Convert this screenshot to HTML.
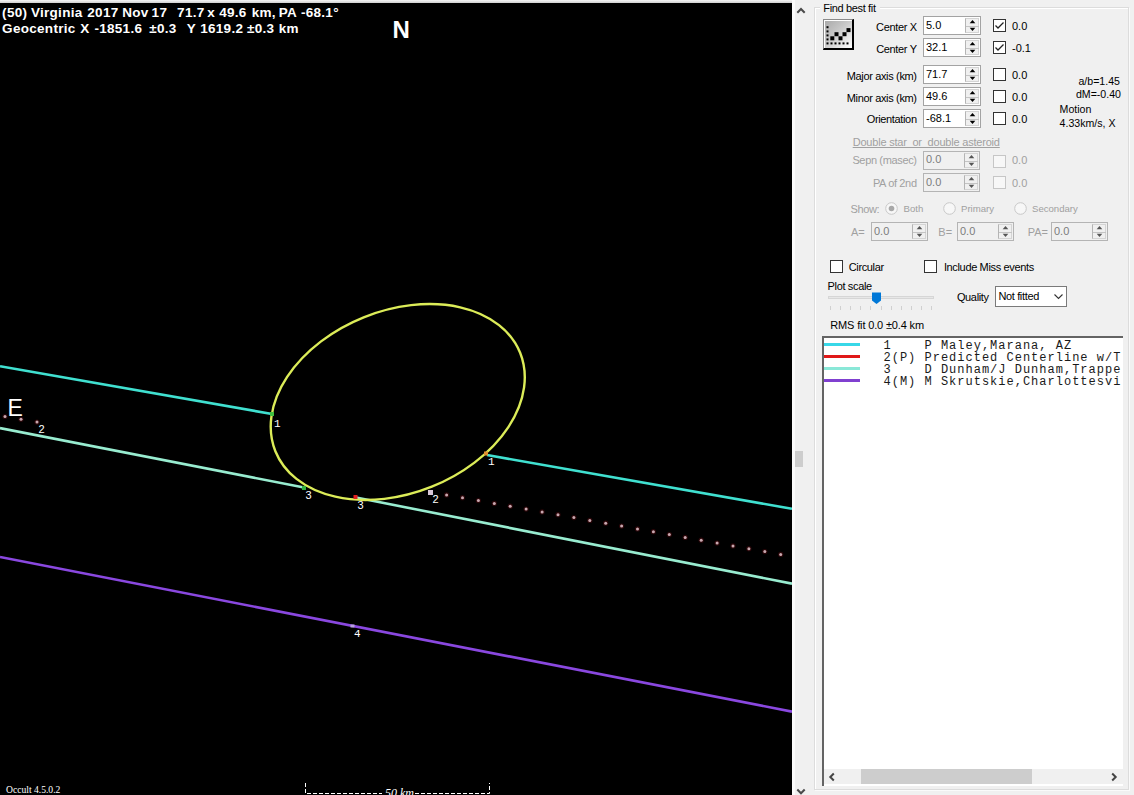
<!DOCTYPE html>
<html><head><meta charset="utf-8">
<style>
*{margin:0;padding:0;box-sizing:border-box}
html,body{width:1134px;height:795px;overflow:hidden;background:#f0f0f0;font-family:"Liberation Sans",sans-serif;font-size:11px;color:#000;position:relative}
#topband{position:absolute;left:0;top:0;width:792px;height:3px;background:linear-gradient(#f6f6f6,#cfcfcf)}
#plot{position:absolute;left:0;top:3px;width:792px;height:792px;background:#000;overflow:hidden}
#plot svg{position:absolute;left:0;top:-3px}
.t{position:absolute;white-space:nowrap}
</style></head><body>
<div id="topband"></div>
<div id="plot"><svg width="792" height="798" viewBox="0 0 792 798">
<line x1="0" y1="366.2" x2="272" y2="414" stroke="#40e0d0" stroke-width="2.6"/>
<line x1="487" y1="455" x2="792" y2="508.8" stroke="#40e0d0" stroke-width="2.6"/>
<line x1="0" y1="428.1" x2="304" y2="487.5" stroke="#98ecd0" stroke-width="2.6"/>
<line x1="356" y1="497.5" x2="792" y2="583.7" stroke="#98ecd0" stroke-width="2.6"/>
<line x1="0" y1="557" x2="792" y2="711.6" stroke="#8a48e0" stroke-width="2.6"/>
<ellipse cx="397.75" cy="402" rx="131.9" ry="91.3" transform="rotate(-21.9 397.75 402)" fill="none" stroke="#dcec58" stroke-width="2.4"/>
<rect x="270" y="412" width="4" height="4" fill="#40c040"/>
<rect x="484" y="451.5" width="4" height="4" fill="#e09030"/>
<rect x="302" y="486" width="4" height="4" fill="#30b040"/>
<rect x="353.5" y="495" width="4" height="4" fill="#e02020"/>
<rect x="428" y="490" width="5" height="5" fill="#d8c8d8"/>
<rect x="350.5" y="624.5" width="4" height="3" fill="#b8a0e0"/>
<text x="274" y="427" fill="#fff" font-family="Liberation Mono" font-size="11">1</text>
<text x="488" y="465" fill="#fff" font-family="Liberation Mono" font-size="11">1</text>
<text x="305.5" y="499" fill="#fff" font-family="Liberation Sans" font-size="11">3</text>
<text x="357.5" y="509" fill="#fff" font-family="Liberation Sans" font-size="11">3</text>
<text x="432.5" y="503" fill="#fff" font-family="Liberation Sans" font-size="11">2</text>
<text x="38.5" y="433" fill="#fff" font-family="Liberation Sans" font-size="11">2</text>
<text x="354" y="637" fill="#fff" font-family="Liberation Mono" font-size="11">4</text>
<text x="392.5" y="38" fill="#fff" font-family="Liberation Sans" font-weight="bold" font-size="24">N</text>
<text x="7.5" y="416" fill="#fff" font-family="Liberation Sans" font-size="23">E</text>
<path d="M305.5 783 V793.5 H489.5 V783" fill="none" stroke="#fff" stroke-width="1" stroke-dasharray="4 2"/>
<rect x="382" y="787" width="32" height="10" fill="#000"/>
<text x="385" y="797" fill="#fff" font-family="Liberation Serif" font-style="italic" font-size="12">50 km</text>
<text x="6" y="793" fill="#fff" font-family="Liberation Serif" font-size="9.6">Occult 4.5.0.2</text>
<circle cx="5.0" cy="416.5" r="2.6" fill="#2a0608"/><circle cx="5.0" cy="416.5" r="1.5" fill="#c8a8b0"/><circle cx="21.0" cy="419.3" r="2.6" fill="#2a0608"/><circle cx="21.0" cy="419.3" r="1.5" fill="#c8a8b0"/><circle cx="37.0" cy="422.1" r="2.6" fill="#2a0608"/><circle cx="37.0" cy="422.1" r="1.5" fill="#c8a8b0"/><circle cx="446.6" cy="494.9" r="2.6" fill="#2a0608"/><circle cx="446.6" cy="494.9" r="1.5" fill="#c8a8b0"/><circle cx="462.5" cy="497.7" r="2.6" fill="#2a0608"/><circle cx="462.5" cy="497.7" r="1.5" fill="#c8a8b0"/><circle cx="478.4" cy="500.6" r="2.6" fill="#2a0608"/><circle cx="478.4" cy="500.6" r="1.5" fill="#c8a8b0"/><circle cx="494.3" cy="503.4" r="2.6" fill="#2a0608"/><circle cx="494.3" cy="503.4" r="1.5" fill="#c8a8b0"/><circle cx="510.2" cy="506.2" r="2.6" fill="#2a0608"/><circle cx="510.2" cy="506.2" r="1.5" fill="#c8a8b0"/><circle cx="526.1" cy="509.1" r="2.6" fill="#2a0608"/><circle cx="526.1" cy="509.1" r="1.5" fill="#c8a8b0"/><circle cx="542.1" cy="511.9" r="2.6" fill="#2a0608"/><circle cx="542.1" cy="511.9" r="1.5" fill="#c8a8b0"/><circle cx="558.0" cy="514.7" r="2.6" fill="#2a0608"/><circle cx="558.0" cy="514.7" r="1.5" fill="#c8a8b0"/><circle cx="573.9" cy="517.6" r="2.6" fill="#2a0608"/><circle cx="573.9" cy="517.6" r="1.5" fill="#c8a8b0"/><circle cx="589.8" cy="520.4" r="2.6" fill="#2a0608"/><circle cx="589.8" cy="520.4" r="1.5" fill="#c8a8b0"/><circle cx="605.7" cy="523.2" r="2.6" fill="#2a0608"/><circle cx="605.7" cy="523.2" r="1.5" fill="#c8a8b0"/><circle cx="621.6" cy="526.1" r="2.6" fill="#2a0608"/><circle cx="621.6" cy="526.1" r="1.5" fill="#c8a8b0"/><circle cx="637.5" cy="528.9" r="2.6" fill="#2a0608"/><circle cx="637.5" cy="528.9" r="1.5" fill="#c8a8b0"/><circle cx="653.4" cy="531.7" r="2.6" fill="#2a0608"/><circle cx="653.4" cy="531.7" r="1.5" fill="#c8a8b0"/><circle cx="669.3" cy="534.6" r="2.6" fill="#2a0608"/><circle cx="669.3" cy="534.6" r="1.5" fill="#c8a8b0"/><circle cx="685.2" cy="537.4" r="2.6" fill="#2a0608"/><circle cx="685.2" cy="537.4" r="1.5" fill="#c8a8b0"/><circle cx="701.2" cy="540.2" r="2.6" fill="#2a0608"/><circle cx="701.2" cy="540.2" r="1.5" fill="#c8a8b0"/><circle cx="717.1" cy="543.1" r="2.6" fill="#2a0608"/><circle cx="717.1" cy="543.1" r="1.5" fill="#c8a8b0"/><circle cx="733.0" cy="545.9" r="2.6" fill="#2a0608"/><circle cx="733.0" cy="545.9" r="1.5" fill="#c8a8b0"/><circle cx="748.9" cy="548.7" r="2.6" fill="#2a0608"/><circle cx="748.9" cy="548.7" r="1.5" fill="#c8a8b0"/><circle cx="764.8" cy="551.6" r="2.6" fill="#2a0608"/><circle cx="764.8" cy="551.6" r="1.5" fill="#c8a8b0"/><circle cx="780.7" cy="554.4" r="2.6" fill="#2a0608"/><circle cx="780.7" cy="554.4" r="1.5" fill="#c8a8b0"/>
</svg></div>
<div class="t" style="left:2.0999999999999996px;top:4.92px;font-size:13.5px;line-height:16.2px;color:#fff;font-weight:bold;letter-spacing:0.3px;">(50)</div>
<div class="t" style="left:30.9px;top:4.92px;font-size:13.5px;line-height:16.2px;color:#fff;font-weight:bold;letter-spacing:0.3px;">Virginia</div>
<div class="t" style="left:87.3px;top:4.92px;font-size:13.5px;line-height:16.2px;color:#fff;font-weight:bold;letter-spacing:0.3px;">2017</div>
<div class="t" style="left:122.2px;top:4.92px;font-size:13.5px;line-height:16.2px;color:#fff;font-weight:bold;letter-spacing:0.3px;">Nov</div>
<div class="t" style="left:151.6px;top:4.92px;font-size:13.5px;line-height:16.2px;color:#fff;font-weight:bold;letter-spacing:0.3px;">17</div>
<div class="t" style="left:177.1px;top:4.92px;font-size:13.5px;line-height:16.2px;color:#fff;font-weight:bold;letter-spacing:0.3px;">71.7</div>
<div class="t" style="left:207.29999999999998px;top:4.92px;font-size:13.5px;line-height:16.2px;color:#fff;font-weight:bold;letter-spacing:0.3px;">x</div>
<div class="t" style="left:219.2px;top:4.92px;font-size:13.5px;line-height:16.2px;color:#fff;font-weight:bold;letter-spacing:0.3px;">49.6</div>
<div class="t" style="left:251.7px;top:4.92px;font-size:13.5px;line-height:16.2px;color:#fff;font-weight:bold;letter-spacing:0.3px;">km,</div>
<div class="t" style="left:278.7px;top:4.92px;font-size:13.5px;line-height:16.2px;color:#fff;font-weight:bold;letter-spacing:0.3px;">PA</div>
<div class="t" style="left:300.9px;top:4.92px;font-size:13.5px;line-height:16.2px;color:#fff;font-weight:bold;letter-spacing:0.3px;">-68.1°</div>
<div class="t" style="left:2.0999999999999996px;top:21.12px;font-size:13.5px;line-height:16.2px;color:#fff;font-weight:bold;letter-spacing:0.3px;">Geocentric</div>
<div class="t" style="left:80.2px;top:21.12px;font-size:13.5px;line-height:16.2px;color:#fff;font-weight:bold;letter-spacing:0.3px;">X</div>
<div class="t" style="left:94.4px;top:21.12px;font-size:13.5px;line-height:16.2px;color:#fff;font-weight:bold;letter-spacing:0.3px;">-1851.6</div>
<div class="t" style="left:149.2px;top:21.12px;font-size:13.5px;line-height:16.2px;color:#fff;font-weight:bold;letter-spacing:0.3px;">±0.3</div>
<div class="t" style="left:186.7px;top:21.12px;font-size:13.5px;line-height:16.2px;color:#fff;font-weight:bold;letter-spacing:0.3px;">Y</div>
<div class="t" style="left:200.2px;top:21.12px;font-size:13.5px;line-height:16.2px;color:#fff;font-weight:bold;letter-spacing:0.3px;">1619.2</div>
<div class="t" style="left:247.0px;top:21.12px;font-size:13.5px;line-height:16.2px;color:#fff;font-weight:bold;letter-spacing:0.3px;">±0.3</div>
<div class="t" style="left:278.7px;top:21.12px;font-size:13.5px;line-height:16.2px;color:#fff;font-weight:bold;letter-spacing:0.3px;">km</div>
<div style="position:absolute;left:792px;top:0px;width:3px;height:795px;background:#fbfbfb;"></div>
<div style="position:absolute;left:795px;top:451px;width:8px;height:16px;background:#cdcdcd;"></div>
<svg style="position:absolute;left:795px;top:4px" width="12" height="12"><path d="M2.3 8.8 L6 5 L9.7 8.8" stroke="#4a4a4a" stroke-width="2" fill="none"/></svg>
<svg style="position:absolute;left:795px;top:784px" width="12" height="12"><path d="M2.3 5.5 L6 9.3 L9.7 5.5" stroke="#4a4a4a" stroke-width="2" fill="none"/></svg>
<div style="position:absolute;left:814px;top:7px;width:315px;height:783px;border:1px solid #dcdcdc;box-shadow:inset 1px 1px 0 #fff, 1px 1px 0 #fafafa;"></div>
<div style="position:absolute;left:820px;top:2px;width:60px;height:12px;background:#f0f0f0;"></div>
<div class="t" style="left:823.3px;top:1.59px;font-size:11px;line-height:13.2px;color:#000;font-weight:normal;letter-spacing:-0.35px;">Find best fit</div>
<div style="position:absolute;left:823px;top:19px;width:31px;height:31px;border-top:1px solid #8a8a8a;border-left:1px solid #8a8a8a;border-right:2px solid #000;border-bottom:2px solid #000;background:linear-gradient(135deg,#a8a8a8 0%,#c8c8c8 45%,#ffffff 100%);box-shadow:inset 1px 1px 0 #fff"></div>
<svg style="position:absolute;left:823px;top:19px" width="31" height="31">
<rect x="3.5" y="7.2" width="2" height="2" fill="#000"/><rect x="3.5" y="11.4" width="2" height="2" fill="#000"/><rect x="3.5" y="15.4" width="2" height="2" fill="#000"/><rect x="3.5" y="19.4" width="2" height="2" fill="#000"/><rect x="3.5" y="23.4" width="2" height="2" fill="#000"/><rect x="7.5" y="23.4" width="2" height="2" fill="#000"/><rect x="11.5" y="23.4" width="2" height="2" fill="#000"/><rect x="15.5" y="23.4" width="2" height="2" fill="#000"/><rect x="19.5" y="23.4" width="2" height="2" fill="#000"/><rect x="23.5" y="23.4" width="2" height="2" fill="#000"/><rect x="7.300000000000001" y="17.3" width="4" height="4" fill="#000"/><rect x="11.5" y="13.2" width="4" height="4" fill="#000"/><rect x="15.5" y="17.3" width="4" height="4" fill="#000"/><rect x="19.5" y="13.2" width="4" height="4" fill="#000"/><rect x="23.5" y="9.1" width="4" height="4" fill="#000"/></svg>
<div class="t" style="right:217.35px;top:20.79px;font-size:11px;line-height:13.2px;color:#000;font-weight:normal;letter-spacing:-0.35px;">Center X</div>
<div style="position:absolute;left:923px;top:16px;width:58px;height:19px;background:#fff;border:1px solid #a3a3a3;"></div>
<div style="position:absolute;left:965px;top:18px;width:14px;height:15px;background:#f0f0f0;border:1px solid #d4d4d4;border-left-color:#b4b4b4;"></div>
<div style="position:absolute;left:966px;top:25.5px;width:13px;height:1px;background:#c4c4c4;"></div>
<svg style="position:absolute;left:966px;top:18px" width="13" height="15"><path d="M3.7 5.2 L6.5 2 L9.3 5.2Z" fill="#000"/><path d="M3.7 9.8 L6.5 13 L9.3 9.8Z" fill="#000"/></svg>
<div class="t" style="left:926px;top:18.59px;font-size:11px;line-height:13.2px;color:#000;font-weight:normal;">5.0</div>
<div style="position:absolute;left:993px;top:19px;width:13px;height:13px;background:#fff;border:1px solid #333;"></div>
<svg style="position:absolute;left:993px;top:19px" width="13" height="13"><path d="M2.5 6.5 L5 9 L10.5 3.5" stroke="#222" stroke-width="1.3" fill="none"/></svg>
<div class="t" style="left:1012px;top:19.59px;font-size:11px;line-height:13.2px;color:#000;font-weight:normal;">0.0</div>
<div class="t" style="right:217.35px;top:43.09px;font-size:11px;line-height:13.2px;color:#000;font-weight:normal;letter-spacing:-0.35px;">Center Y</div>
<div style="position:absolute;left:923px;top:38px;width:58px;height:19px;background:#fff;border:1px solid #a3a3a3;"></div>
<div style="position:absolute;left:965px;top:40px;width:14px;height:15px;background:#f0f0f0;border:1px solid #d4d4d4;border-left-color:#b4b4b4;"></div>
<div style="position:absolute;left:966px;top:47.5px;width:13px;height:1px;background:#c4c4c4;"></div>
<svg style="position:absolute;left:966px;top:40px" width="13" height="15"><path d="M3.7 5.2 L6.5 2 L9.3 5.2Z" fill="#000"/><path d="M3.7 9.8 L6.5 13 L9.3 9.8Z" fill="#000"/></svg>
<div class="t" style="left:926px;top:40.59px;font-size:11px;line-height:13.2px;color:#000;font-weight:normal;">32.1</div>
<div style="position:absolute;left:993px;top:41px;width:13px;height:13px;background:#fff;border:1px solid #333;"></div>
<svg style="position:absolute;left:993px;top:41px" width="13" height="13"><path d="M2.5 6.5 L5 9 L10.5 3.5" stroke="#222" stroke-width="1.3" fill="none"/></svg>
<div class="t" style="left:1012px;top:41.59px;font-size:11px;line-height:13.2px;color:#000;font-weight:normal;">-0.1</div>
<div class="t" style="right:217.35px;top:69.69px;font-size:11px;line-height:13.2px;color:#000;font-weight:normal;letter-spacing:-0.35px;">Major axis (km)</div>
<div style="position:absolute;left:923px;top:65px;width:58px;height:19px;background:#fff;border:1px solid #a3a3a3;"></div>
<div style="position:absolute;left:965px;top:67px;width:14px;height:15px;background:#f0f0f0;border:1px solid #d4d4d4;border-left-color:#b4b4b4;"></div>
<div style="position:absolute;left:966px;top:74.5px;width:13px;height:1px;background:#c4c4c4;"></div>
<svg style="position:absolute;left:966px;top:67px" width="13" height="15"><path d="M3.7 5.2 L6.5 2 L9.3 5.2Z" fill="#000"/><path d="M3.7 9.8 L6.5 13 L9.3 9.8Z" fill="#000"/></svg>
<div class="t" style="left:926px;top:67.59px;font-size:11px;line-height:13.2px;color:#000;font-weight:normal;">71.7</div>
<div style="position:absolute;left:993px;top:68px;width:13px;height:13px;background:#fff;border:1px solid #333;"></div>
<div class="t" style="left:1012px;top:68.59px;font-size:11px;line-height:13.2px;color:#000;font-weight:normal;">0.0</div>
<div class="t" style="right:217.35px;top:92.09px;font-size:11px;line-height:13.2px;color:#000;font-weight:normal;letter-spacing:-0.35px;">Minor axis (km)</div>
<div style="position:absolute;left:923px;top:87px;width:58px;height:19px;background:#fff;border:1px solid #a3a3a3;"></div>
<div style="position:absolute;left:965px;top:89px;width:14px;height:15px;background:#f0f0f0;border:1px solid #d4d4d4;border-left-color:#b4b4b4;"></div>
<div style="position:absolute;left:966px;top:96.5px;width:13px;height:1px;background:#c4c4c4;"></div>
<svg style="position:absolute;left:966px;top:89px" width="13" height="15"><path d="M3.7 5.2 L6.5 2 L9.3 5.2Z" fill="#000"/><path d="M3.7 9.8 L6.5 13 L9.3 9.8Z" fill="#000"/></svg>
<div class="t" style="left:926px;top:89.59px;font-size:11px;line-height:13.2px;color:#000;font-weight:normal;">49.6</div>
<div style="position:absolute;left:993px;top:90px;width:13px;height:13px;background:#fff;border:1px solid #333;"></div>
<div class="t" style="left:1012px;top:90.59px;font-size:11px;line-height:13.2px;color:#000;font-weight:normal;">0.0</div>
<div class="t" style="right:217.35px;top:113.09px;font-size:11px;line-height:13.2px;color:#000;font-weight:normal;letter-spacing:-0.35px;">Orientation</div>
<div style="position:absolute;left:923px;top:109px;width:58px;height:19px;background:#fff;border:1px solid #a3a3a3;"></div>
<div style="position:absolute;left:965px;top:111px;width:14px;height:15px;background:#f0f0f0;border:1px solid #d4d4d4;border-left-color:#b4b4b4;"></div>
<div style="position:absolute;left:966px;top:118.5px;width:13px;height:1px;background:#c4c4c4;"></div>
<svg style="position:absolute;left:966px;top:111px" width="13" height="15"><path d="M3.7 5.2 L6.5 2 L9.3 5.2Z" fill="#000"/><path d="M3.7 9.8 L6.5 13 L9.3 9.8Z" fill="#000"/></svg>
<div class="t" style="left:926px;top:111.59px;font-size:11px;line-height:13.2px;color:#000;font-weight:normal;">-68.1</div>
<div style="position:absolute;left:993px;top:112px;width:13px;height:13px;background:#fff;border:1px solid #333;"></div>
<div class="t" style="left:1012px;top:112.59px;font-size:11px;line-height:13.2px;color:#000;font-weight:normal;">0.0</div>
<div class="t" style="right:14px;top:74.77px;font-size:10.6px;line-height:12.72px;color:#000;font-weight:normal;">a/b=1.45</div>
<div class="t" style="right:13px;top:87.97px;font-size:10.6px;line-height:12.72px;color:#000;font-weight:normal;">dM=-0.40</div>
<div class="t" style="left:1059.6px;top:102.97px;font-size:10.6px;line-height:12.72px;color:#000;font-weight:normal;">Motion</div>
<div class="t" style="left:1059.6px;top:116.97px;font-size:10.6px;line-height:12.72px;color:#000;font-weight:normal;">4.33km/s, X</div>
<div class="t" style="left:852.7px;top:135.59px;font-size:11px;line-height:13.2px;color:#a0a0a0;font-weight:normal;text-decoration:underline;letter-spacing:-0.2px;">Double star&nbsp; or&nbsp; double asteroid</div>
<div class="t" style="right:217.35px;top:154.09px;font-size:11px;line-height:13.2px;color:#a0a0a0;font-weight:normal;letter-spacing:-0.35px;">Sepn (masec)</div>
<div style="position:absolute;left:923px;top:151px;width:57px;height:19px;background:#f0f0f0;border:1px solid #b4b4b4;"></div>
<div style="position:absolute;left:964px;top:153px;width:14px;height:15px;background:#f0f0f0;border:1px solid #d4d4d4;border-left-color:#b4b4b4;"></div>
<div style="position:absolute;left:965px;top:160.5px;width:13px;height:1px;background:#c4c4c4;"></div>
<svg style="position:absolute;left:965px;top:153px" width="13" height="15"><path d="M3.7 5.2 L6.5 2 L9.3 5.2Z" fill="#555"/><path d="M3.7 9.8 L6.5 13 L9.3 9.8Z" fill="#555"/></svg>
<div class="t" style="left:926px;top:152.59px;font-size:11px;line-height:13.2px;color:#7c7c7c;font-weight:normal;">0.0</div>
<div style="position:absolute;left:993px;top:155px;width:13px;height:13px;background:#f7f7f7;border:1px solid #c6c6c6;"></div>
<div class="t" style="left:1012px;top:153.59px;font-size:11px;line-height:13.2px;color:#a0a0a0;font-weight:normal;">0.0</div>
<div class="t" style="right:217.35px;top:177.09px;font-size:11px;line-height:13.2px;color:#a0a0a0;font-weight:normal;letter-spacing:-0.35px;">PA of 2nd</div>
<div style="position:absolute;left:923px;top:173px;width:57px;height:19px;background:#f0f0f0;border:1px solid #b4b4b4;"></div>
<div style="position:absolute;left:964px;top:175px;width:14px;height:15px;background:#f0f0f0;border:1px solid #d4d4d4;border-left-color:#b4b4b4;"></div>
<div style="position:absolute;left:965px;top:182.5px;width:13px;height:1px;background:#c4c4c4;"></div>
<svg style="position:absolute;left:965px;top:175px" width="13" height="15"><path d="M3.7 5.2 L6.5 2 L9.3 5.2Z" fill="#555"/><path d="M3.7 9.8 L6.5 13 L9.3 9.8Z" fill="#555"/></svg>
<div class="t" style="left:926px;top:175.59px;font-size:11px;line-height:13.2px;color:#7c7c7c;font-weight:normal;">0.0</div>
<div style="position:absolute;left:993px;top:176px;width:13px;height:13px;background:#f7f7f7;border:1px solid #c6c6c6;"></div>
<div class="t" style="left:1012px;top:176.59px;font-size:11px;line-height:13.2px;color:#a0a0a0;font-weight:normal;">0.0</div>
<div class="t" style="left:850.5px;top:202.59px;font-size:11px;line-height:13.2px;color:#a0a0a0;font-weight:normal;letter-spacing:-0.35px;">Show:</div>
<svg style="position:absolute;left:885px;top:201.5px" width="13" height="13"><circle cx="6.5" cy="6.5" r="5.8" fill="#f7f7f7" stroke="#c8c8c8" stroke-width="1"/><circle cx="6.5" cy="6.5" r="2.8" fill="#a8a8a8"/></svg>
<div class="t" style="left:903.6px;top:203.21px;font-size:9.6px;line-height:11.52px;color:#a0a0a0;font-weight:normal;">Both</div>
<svg style="position:absolute;left:943px;top:201.5px" width="13" height="13"><circle cx="6.5" cy="6.5" r="5.8" fill="#f7f7f7" stroke="#c8c8c8" stroke-width="1"/></svg>
<div class="t" style="left:961px;top:203.21px;font-size:9.6px;line-height:11.52px;color:#a0a0a0;font-weight:normal;">Primary</div>
<svg style="position:absolute;left:1014px;top:201.5px" width="13" height="13"><circle cx="6.5" cy="6.5" r="5.8" fill="#f7f7f7" stroke="#c8c8c8" stroke-width="1"/></svg>
<div class="t" style="left:1032px;top:203.21px;font-size:9.6px;line-height:11.52px;color:#a0a0a0;font-weight:normal;">Secondary</div>
<div class="t" style="left:851px;top:226.09px;font-size:11px;line-height:13.2px;color:#a0a0a0;font-weight:normal;">A=</div>
<div style="position:absolute;left:871px;top:222px;width:57px;height:19px;background:#f0f0f0;border:1px solid #b4b4b4;"></div>
<div style="position:absolute;left:912px;top:224px;width:14px;height:15px;background:#f0f0f0;border:1px solid #d4d4d4;border-left-color:#b4b4b4;"></div>
<div style="position:absolute;left:913px;top:231.5px;width:13px;height:1px;background:#c4c4c4;"></div>
<svg style="position:absolute;left:913px;top:224px" width="13" height="15"><path d="M3.7 5.2 L6.5 2 L9.3 5.2Z" fill="#555"/><path d="M3.7 9.8 L6.5 13 L9.3 9.8Z" fill="#555"/></svg>
<div class="t" style="left:874px;top:224.59px;font-size:11px;line-height:13.2px;color:#7c7c7c;font-weight:normal;">0.0</div>
<div class="t" style="left:938.3px;top:226.09px;font-size:11px;line-height:13.2px;color:#a0a0a0;font-weight:normal;">B=</div>
<div style="position:absolute;left:957px;top:222px;width:57px;height:19px;background:#f0f0f0;border:1px solid #b4b4b4;"></div>
<div style="position:absolute;left:998px;top:224px;width:14px;height:15px;background:#f0f0f0;border:1px solid #d4d4d4;border-left-color:#b4b4b4;"></div>
<div style="position:absolute;left:999px;top:231.5px;width:13px;height:1px;background:#c4c4c4;"></div>
<svg style="position:absolute;left:999px;top:224px" width="13" height="15"><path d="M3.7 5.2 L6.5 2 L9.3 5.2Z" fill="#555"/><path d="M3.7 9.8 L6.5 13 L9.3 9.8Z" fill="#555"/></svg>
<div class="t" style="left:960px;top:224.59px;font-size:11px;line-height:13.2px;color:#7c7c7c;font-weight:normal;">0.0</div>
<div class="t" style="left:1027.7px;top:226.09px;font-size:11px;line-height:13.2px;color:#a0a0a0;font-weight:normal;">PA=</div>
<div style="position:absolute;left:1051px;top:222px;width:57px;height:19px;background:#f0f0f0;border:1px solid #b4b4b4;"></div>
<div style="position:absolute;left:1092px;top:224px;width:14px;height:15px;background:#f0f0f0;border:1px solid #d4d4d4;border-left-color:#b4b4b4;"></div>
<div style="position:absolute;left:1093px;top:231.5px;width:13px;height:1px;background:#c4c4c4;"></div>
<svg style="position:absolute;left:1093px;top:224px" width="13" height="15"><path d="M3.7 5.2 L6.5 2 L9.3 5.2Z" fill="#555"/><path d="M3.7 9.8 L6.5 13 L9.3 9.8Z" fill="#555"/></svg>
<div class="t" style="left:1054px;top:224.59px;font-size:11px;line-height:13.2px;color:#7c7c7c;font-weight:normal;">0.0</div>
<div style="position:absolute;left:830px;top:260px;width:13px;height:13px;background:#fff;border:1px solid #333;"></div>
<div class="t" style="left:848.7px;top:260.59px;font-size:11px;line-height:13.2px;color:#000;font-weight:normal;letter-spacing:-0.35px;">Circular</div>
<div style="position:absolute;left:924px;top:260px;width:13px;height:13px;background:#fff;border:1px solid #333;"></div>
<div class="t" style="left:943.9px;top:260.59px;font-size:11px;line-height:13.2px;color:#000;font-weight:normal;letter-spacing:-0.35px;">Include Miss events</div>
<div class="t" style="left:827.6px;top:280.39px;font-size:11px;line-height:13.2px;color:#000;font-weight:normal;letter-spacing:-0.35px;">Plot scale</div>
<div style="position:absolute;left:828px;top:296px;width:106px;height:3px;background:#e7e7e7;border:1px solid #d6d6d6;"></div>
<svg style="position:absolute;left:871px;top:291px" width="11" height="14"><path d="M1 1.5 H10 V9.5 L5.5 13 L1 9.5Z" fill="#0078d7"/></svg>
<div style="position:absolute;left:830.0px;top:306px;width:1px;height:4px;background:#d0d0d0;"></div>
<div style="position:absolute;left:840.1px;top:306px;width:1px;height:4px;background:#d0d0d0;"></div>
<div style="position:absolute;left:850.2px;top:306px;width:1px;height:4px;background:#d0d0d0;"></div>
<div style="position:absolute;left:860.3px;top:306px;width:1px;height:4px;background:#d0d0d0;"></div>
<div style="position:absolute;left:870.4px;top:306px;width:1px;height:4px;background:#d0d0d0;"></div>
<div style="position:absolute;left:880.5px;top:306px;width:1px;height:4px;background:#d0d0d0;"></div>
<div style="position:absolute;left:890.6px;top:306px;width:1px;height:4px;background:#d0d0d0;"></div>
<div style="position:absolute;left:900.7px;top:306px;width:1px;height:4px;background:#d0d0d0;"></div>
<div style="position:absolute;left:910.8px;top:306px;width:1px;height:4px;background:#d0d0d0;"></div>
<div style="position:absolute;left:920.9px;top:306px;width:1px;height:4px;background:#d0d0d0;"></div>
<div style="position:absolute;left:931.0px;top:306px;width:1px;height:4px;background:#d0d0d0;"></div>
<div class="t" style="left:956.9px;top:291.19px;font-size:11px;line-height:13.2px;color:#000;font-weight:normal;letter-spacing:-0.35px;">Quality</div>
<div style="position:absolute;left:995px;top:286px;width:72px;height:21px;background:#fff;border:1px solid #7a7a7a;"></div>
<div class="t" style="left:998.4px;top:290.09px;font-size:11px;line-height:13.2px;color:#000;font-weight:normal;letter-spacing:-0.35px;">Not fitted</div>
<svg style="position:absolute;left:1053px;top:292px" width="11" height="9"><path d="M1.5 2.5 L5.5 6.5 L9.5 2.5" stroke="#333" stroke-width="1.1" fill="none"/></svg>
<div class="t" style="left:830.3px;top:318.59px;font-size:11px;line-height:13.2px;color:#000;font-weight:normal;letter-spacing:-0.15px;">RMS fit 0.0 ±0.4 km</div>
<div style="position:absolute;left:822px;top:336px;width:301px;height:450px;background:#fff;border-top:2px solid #646464;border-left:2px solid #646464;"></div>
<div style="position:absolute;left:824px;top:338px;width:297px;height:430px;overflow:hidden">
<div style="position:absolute;left:0;top:4.5px;width:36px;height:3px;background:#38d8e8"></div>
<div class="t" style="left:59.5px;top:1px;font-family:'Liberation Mono',monospace;font-size:12px;line-height:14px;letter-spacing:1px;color:#1a1a1a">1&nbsp;&nbsp;&nbsp;&nbsp;P Maley,Marana, AZ</div>
<div style="position:absolute;left:0;top:16.5px;width:36px;height:3px;background:#e01818"></div>
<div class="t" style="left:59.5px;top:13px;font-family:'Liberation Mono',monospace;font-size:12px;line-height:14px;letter-spacing:1px;color:#1a1a1a">2(P) Predicted Centerline w/T</div>
<div style="position:absolute;left:0;top:28.5px;width:36px;height:3px;background:#8ae8d8"></div>
<div class="t" style="left:59.5px;top:25px;font-family:'Liberation Mono',monospace;font-size:12px;line-height:14px;letter-spacing:1px;color:#1a1a1a">3&nbsp;&nbsp;&nbsp;&nbsp;D Dunham/J Dunham,Trappe</div>
<div style="position:absolute;left:0;top:40.5px;width:36px;height:3px;background:#8040d0"></div>
<div class="t" style="left:59.5px;top:37px;font-family:'Liberation Mono',monospace;font-size:12px;line-height:14px;letter-spacing:1px;color:#1a1a1a">4(M) M Skrutskie,Charlottesvi</div>
</div>
<div style="position:absolute;left:824px;top:769px;width:299px;height:15px;background:#f0f0f0;"></div>
<div style="position:absolute;left:861px;top:769px;width:171px;height:15px;background:#cdcdcd;"></div>
<svg style="position:absolute;left:826px;top:771px" width="12" height="12"><path d="M7.8 2.5 L4.3 6 L7.8 9.5" stroke="#444" stroke-width="2" fill="none"/></svg>
<svg style="position:absolute;left:1108px;top:771px" width="12" height="12"><path d="M4.2 2.5 L7.7 6 L4.2 9.5" stroke="#444" stroke-width="2" fill="none"/></svg>
</body></html>
